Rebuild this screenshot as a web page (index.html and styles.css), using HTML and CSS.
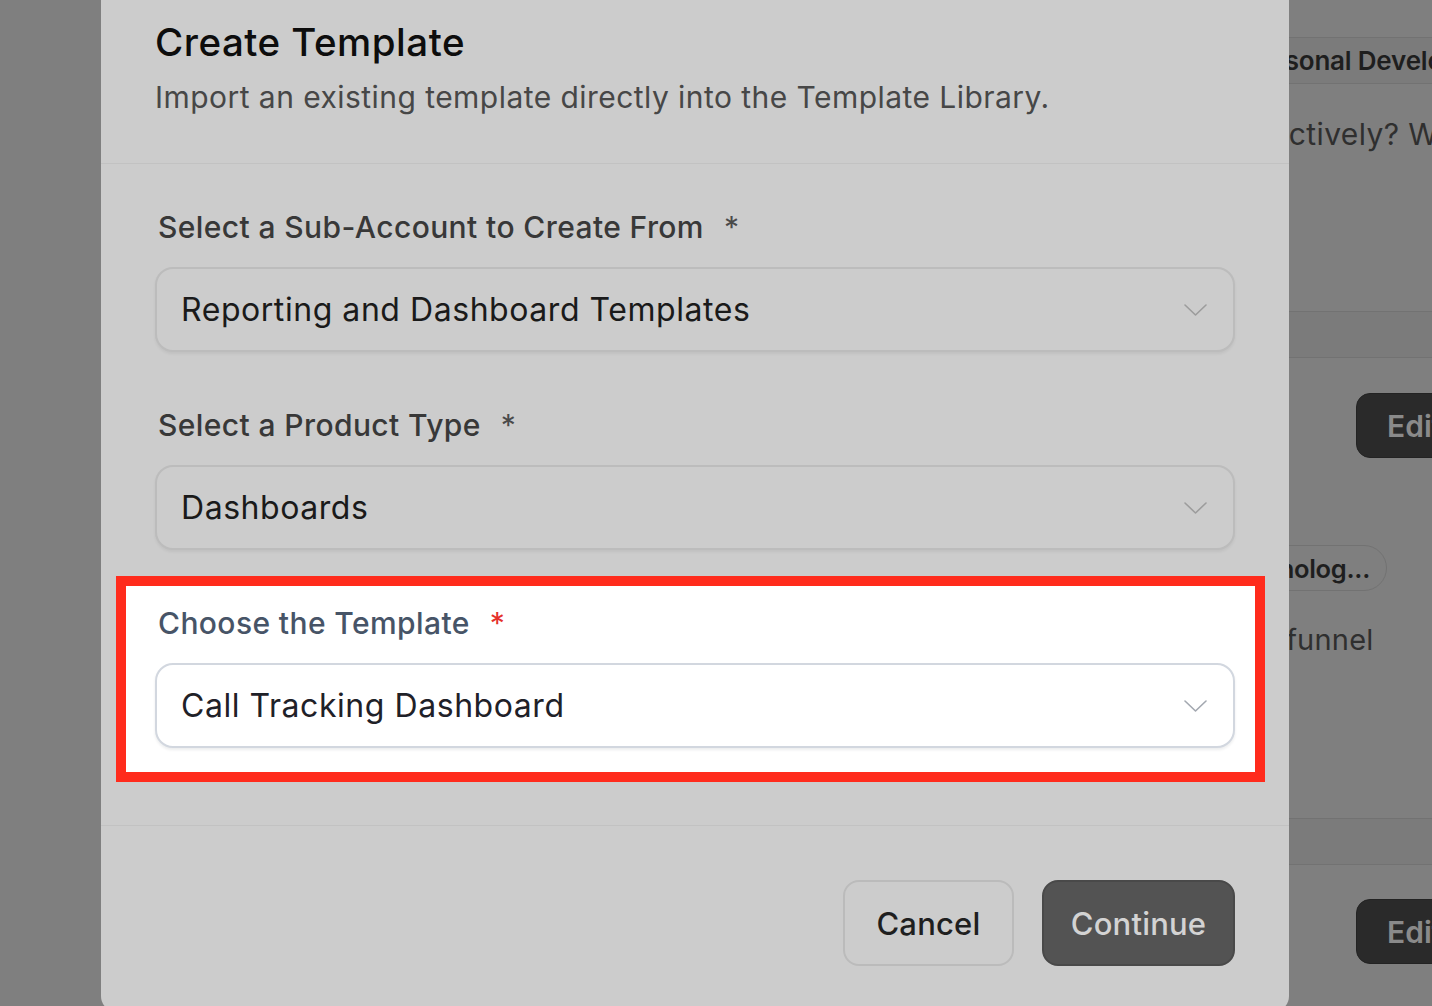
FILE: index.html
```html
<!DOCTYPE html>
<html lang="en">
<head>
<meta charset="utf-8">
<title>Create Template</title>
<link rel="stylesheet" href="styles.css">
</head>
<body>
<div class="page">
  <div class="page-main"></div>
  <div class="page-side">
    <div class="band band--1"><span class="tab-text">Personal Development</span></div>
    <p class="side-text side-text--q">effectively? What</p>
    <div class="band band--2"></div>
    <div class="side-btn side-btn--1">Edit</div>
    <div class="pill"><span>Technolog...</span></div>
    <p class="side-text side-text--funnel">sales funnel</p>
    <div class="band band--3"></div>
    <div class="side-btn side-btn--2">Edit</div>
  </div>
</div>

<div class="modal" role="dialog" aria-labelledby="modal-title">
  <header class="modal-header">
    <h1 class="modal-title" id="modal-title">Create Template</h1>
    <p class="modal-subtitle">Import an existing template directly into the Template Library.</p>
  </header>

  <div class="modal-body">
    <div class="field">
      <label class="field-label">Select a Sub-Account to Create From<span class="req">*</span></label>
      <div class="select">
        <span class="select-value">Reporting and Dashboard Templates</span>
        <svg class="chevron" viewBox="0 0 23 12" width="23" height="12" aria-hidden="true"><path d="M1 1l10.5 10L22 1" fill="none" stroke="currentColor" stroke-width="1.6" stroke-linecap="round" stroke-linejoin="round"/></svg>
      </div>
    </div>

    <div class="field">
      <label class="field-label">Select a Product Type<span class="req">*</span></label>
      <div class="select">
        <span class="select-value">Dashboards</span>
        <svg class="chevron" viewBox="0 0 23 12" width="23" height="12" aria-hidden="true"><path d="M1 1l10.5 10L22 1" fill="none" stroke="currentColor" stroke-width="1.6" stroke-linecap="round" stroke-linejoin="round"/></svg>
      </div>
    </div>

    <div class="field field--highlight">
      <label class="field-label">Choose the Template<span class="req">*</span></label>
      <div class="select">
        <span class="select-value">Call Tracking Dashboard</span>
        <svg class="chevron" viewBox="0 0 23 12" width="23" height="12" aria-hidden="true"><path d="M1 1l10.5 10L22 1" fill="none" stroke="currentColor" stroke-width="1.6" stroke-linecap="round" stroke-linejoin="round"/></svg>
      </div>
    </div>
  </div>

  <footer class="modal-footer">
    <button class="btn btn--ghost" type="button">Cancel</button>
    <button class="btn btn--primary" type="button">Continue</button>
  </footer>
</div>
</body>
</html>
```

FILE: styles.css
```css
* { box-sizing: border-box; }

html, body {
  margin: 0;
  padding: 0;
}

body {
  width: 1432px;
  height: 1006px;
  overflow: hidden;
  background: #7f7f7f;
  font-family: "Inter", "Noto Sans", "Liberation Sans", sans-serif;
  position: relative;
}

/* ---------- dimmed page behind the modal ---------- */
.page {
  display: flex;
  height: 1006px;
}

.page-main {
  width: 1289px;
  flex: none;
}

.page-side {
  flex: 1;
  overflow: hidden;
  display: flex;
  flex-direction: column;
  white-space: nowrap;
}

.band {
  height: 47px;
  border-top: 1px solid #727272;
  border-bottom: 1px solid #727272;
  background: #7b7b7b;
  display: flex;
  align-items: center;
  flex: none;
}

.band--1 { margin-top: 37px; }
.band--2 { margin-top: 157px; }
.band--3 { margin-top: 158px; }

.tab-text {
  font-size: 26px;
  font-weight: 600;
  letter-spacing: -0.2px;
  color: #1e1e1e;
  margin-left: -46px;
}

.side-text {
  margin: 0;
  font-size: 30px;
  line-height: 40px;
  letter-spacing: 0.4px;
  color: #2f2f2f;
  flex: none;
}

.side-text--q {
  margin-top: 30px;
  margin-left: -57px;
}

.side-text--funnel {
  margin-top: 29px;
  margin-left: -83px;
  font-size: 29px;
  letter-spacing: 0.2px;
}

.side-btn {
  flex: none;
  height: 65px;
  margin-left: 67px;
  width: 140px;
  background: #2a2a2a;
  border: 1px solid #232323;
  border-radius: 14px;
  display: flex;
  align-items: center;
  padding-left: 30px;
  font-size: 30px;
  font-weight: 600;
  color: #8a8a8a;
}

.side-btn--1 { margin-top: 35px; }
.side-btn--2 { margin-top: 34px; }

.pill {
  flex: none;
  margin-top: 87px;
  margin-left: -150px;
  width: 248px;
  height: 46px;
  border: 1px solid #727272;
  border-radius: 23px;
  display: flex;
  align-items: center;
  justify-content: flex-end;
  padding-right: 16px;
  font-size: 25.5px;
  font-weight: 600;
  letter-spacing: -0.3px;
  color: #1e1e1e;
}

/* ---------- modal ---------- */
.modal {
  position: absolute;
  left: 101px;
  top: -20px;
  width: 1188px;
  height: 1032px;
  background: #cccccc;
  border-radius: 16px;
  display: flex;
  flex-direction: column;
}

.modal-header {
  padding: 39px 54px 46px;
  border-bottom: 1px solid #c2c2c2;
}

.modal-title {
  margin: 0;
  font-size: 38.5px;
  line-height: 46px;
  font-weight: 500;
  color: #0d0d0d;
  letter-spacing: 0.5px;
}

.modal-subtitle {
  margin: 12px 0 0;
  font-size: 30px;
  line-height: 40px;
  font-weight: 400;
  color: #474747;
  letter-spacing: 0.45px;
}

.modal-body {
  flex: 1;
  padding: 45px 54px 43px;
  display: flex;
  flex-direction: column;
  gap: 55px;
}

.field {
  display: flex;
  flex-direction: column;
  gap: 22px;
}

.field-label {
  display: block;
  padding-left: 3px;
  font-size: 30px;
  line-height: 36px;
  font-weight: 500;
  letter-spacing: 0.4px;
  color: #383838;
}

.req {
  margin-left: 20px;
  color: #4a4a4a;
  font-weight: 400;
}

.select {
  height: 85px;
  border: 2px solid #bcbcbc;
  border-radius: 18px;
  background: #cccccc;
  box-shadow: 0 2px 3px rgba(0, 0, 0, 0.06);
  display: flex;
  align-items: center;
  justify-content: space-between;
  padding: 0 26px 0 24px;
  color: #9c9c9c;
}

.select-value {
  font-size: 32px;
  font-weight: 400;
  color: #1a1a1a;
  letter-spacing: 0.55px;
}

.chevron {
  display: block;
  flex: none;
}

/* highlighted (annotated) field */
.field--highlight {
  margin: -29px -30px 0 -39px;
  padding: 19px 20px 24px 29px;
  border: 10px solid #ff2b1c;
  background: #ffffff;
}

.field--highlight .field-label {
  color: #475467;
}

.field--highlight .req {
  color: #e5302a;
}

.field--highlight .select {
  background: #ffffff;
  border-color: #d2d7df;
  box-shadow: 0 2px 3px rgba(16, 24, 40, 0.08);
  color: #a3a8b0;
}

.field--highlight .select-value {
  color: #1f2128;
}

/* footer */
.modal-footer {
  border-top: 1px solid #c2c2c2;
  padding: 54px 54px 46px;
  display: flex;
  justify-content: flex-end;
  gap: 28px;
}

.btn {
  height: 86px;
  border-radius: 16px;
  font-family: inherit;
  font-size: 31px;
  font-weight: 500;
  letter-spacing: 0.2px;
  padding: 0;
  display: flex;
  align-items: center;
  justify-content: center;
  cursor: pointer;
}

.btn--ghost {
  width: 171px;
  background: #cccccc;
  border: 2px solid #bbbbbb;
  color: #1f1f1f;
}

.btn--primary {
  width: 193px;
  background: #535353;
  border: 2px solid #494949;
  color: #d3d3d3;
}
```
